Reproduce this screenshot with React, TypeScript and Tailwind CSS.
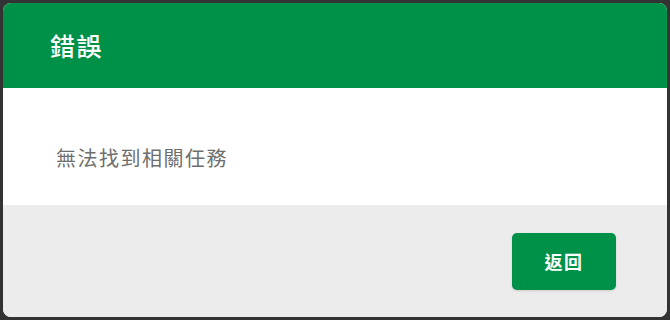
export default function App() {
  return (
    <div
      className="w-[670px] h-[320px] bg-[#333333] p-[3px]"
      style={{ fontFamily: '"Noto Sans CJK TC", "Noto Sans", sans-serif' }}
    >
      <div className="flex h-full flex-col overflow-hidden rounded-lg bg-white">
        {/* Header */}
        <div className="flex h-[85px] items-center bg-[#009149] px-[47px]">
          <h2 className="text-[25px] font-medium tracking-[1.5px] text-white">錯誤</h2>
        </div>

        {/* Body */}
        <div className="h-[117px] px-[53px] pt-[56px]">
          <p className="text-[20px] leading-[28px] tracking-[1.5px] text-[#6e6e6e]">無法找到相關任務</p>
        </div>

        {/* Footer */}
        <div className="flex flex-1 items-start justify-end bg-[#ececec] pr-[51px] pt-[28px]">
          <button className="h-[57px] w-[104px] rounded-[5px] bg-[#009149] text-[18px] font-bold tracking-[1.5px] text-white shadow-sm">
            返回
          </button>
        </div>
      </div>
    </div>
  );
}
